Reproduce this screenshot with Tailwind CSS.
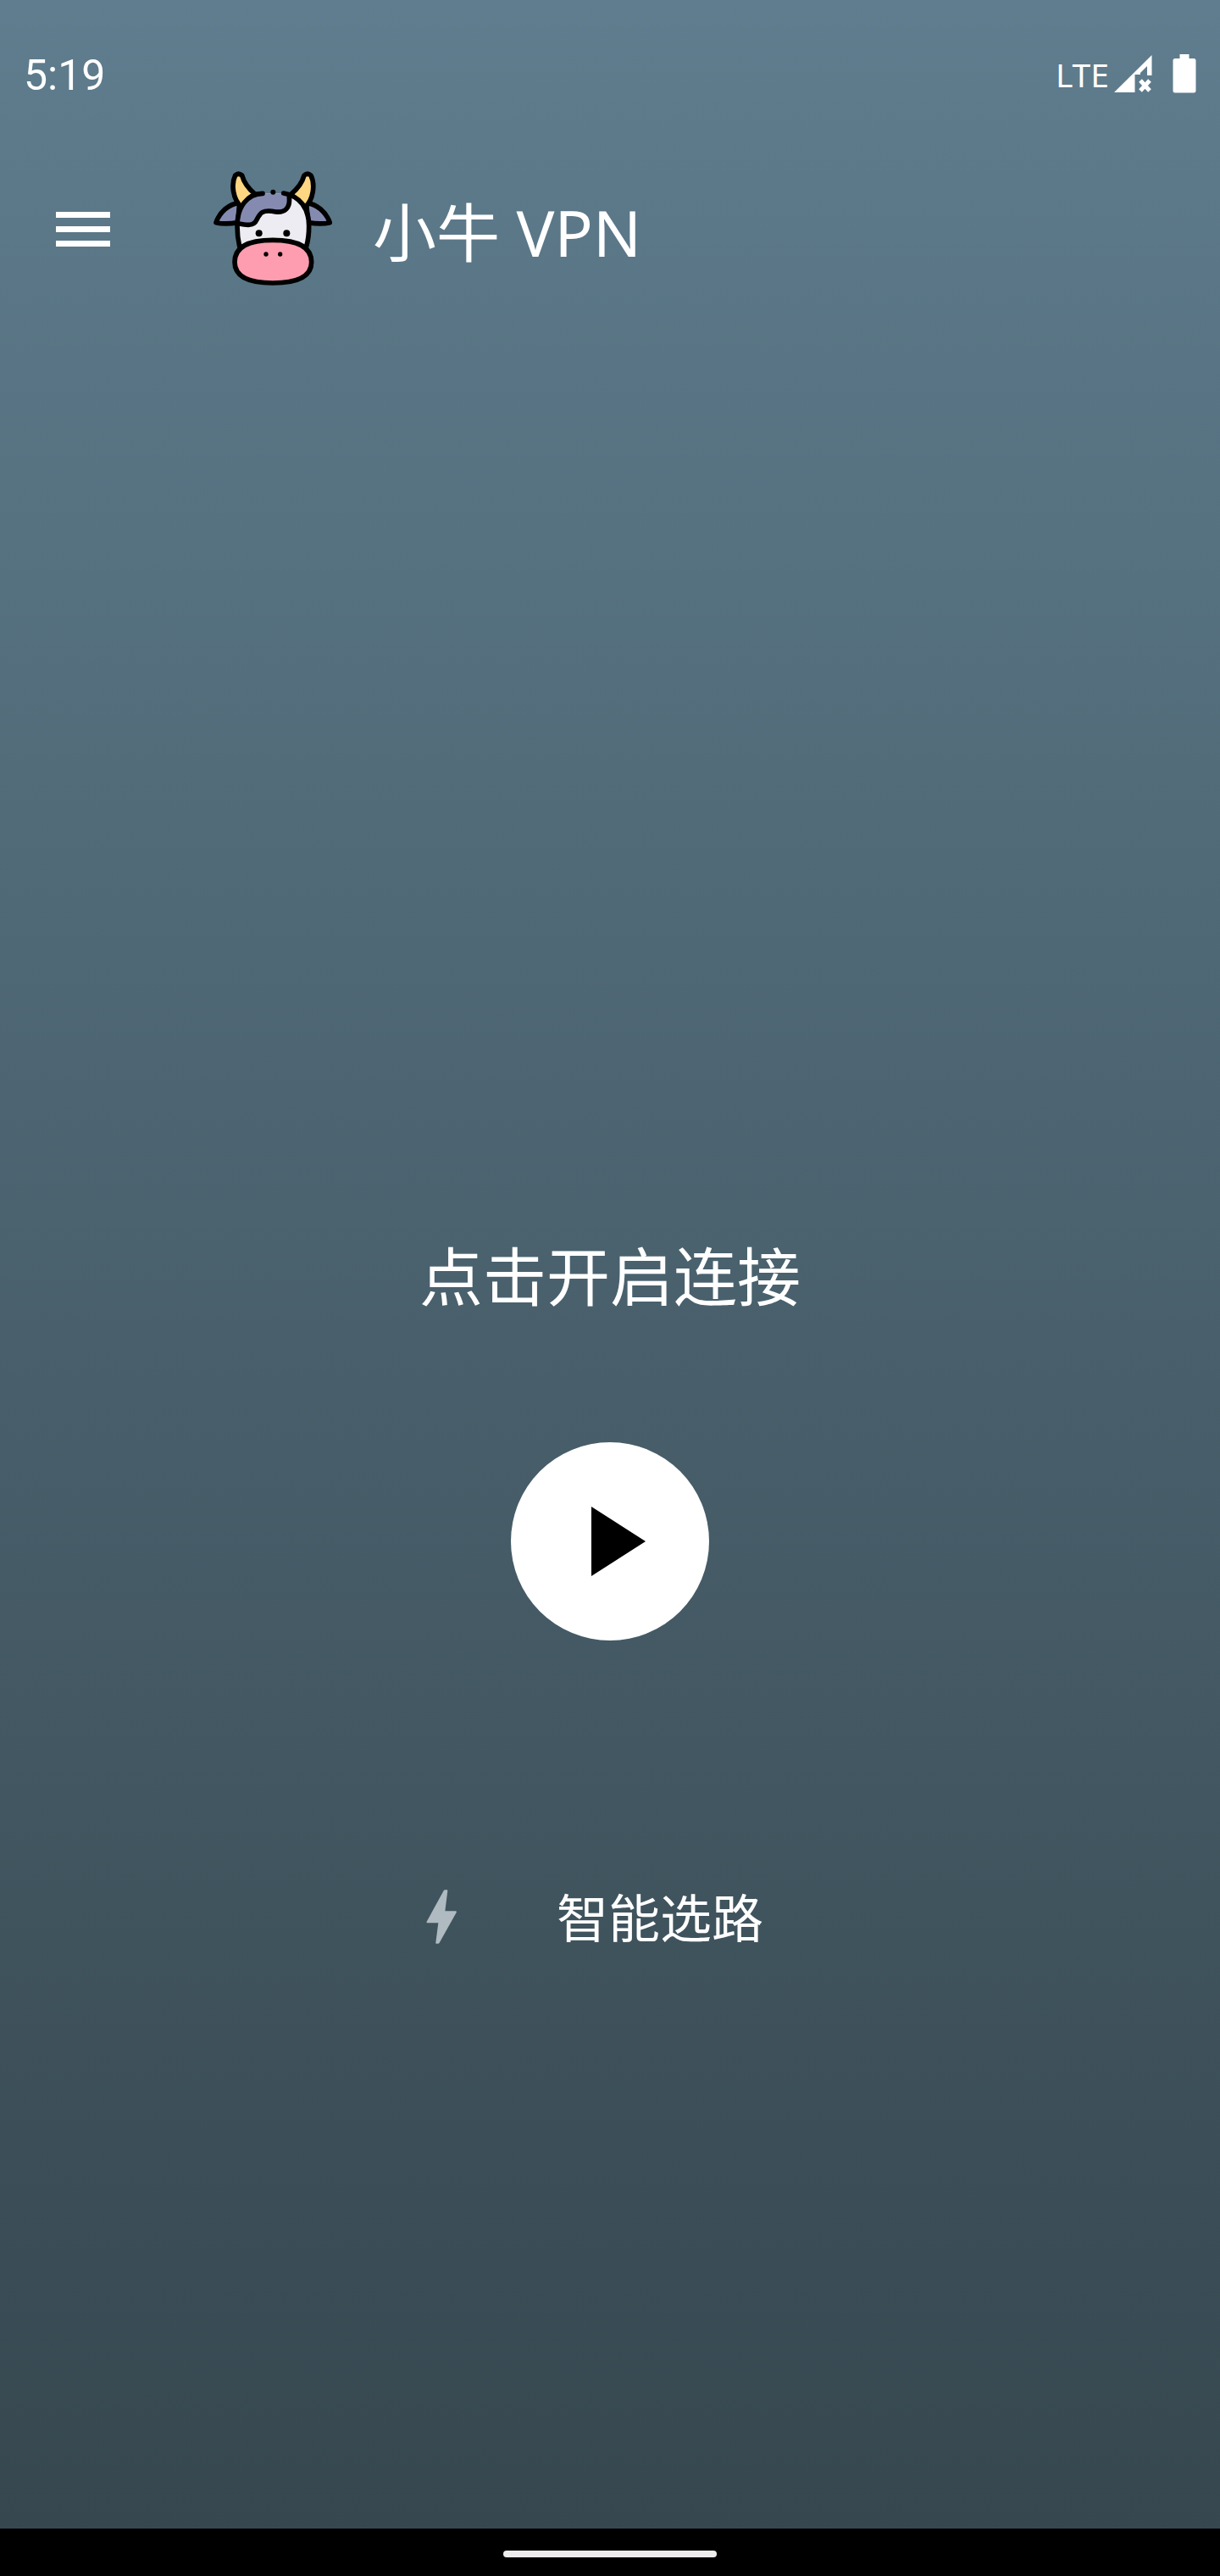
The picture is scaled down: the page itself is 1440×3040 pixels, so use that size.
<!DOCTYPE html>
<html lang="zh-CN">
<head>
  <meta charset="UTF-8">
  <meta name="viewport" content="width=device-width, initial-scale=1">
  <title>小牛 VPN</title>
  <script src="https://cdn.jsdelivr.net/npm/@tailwindcss/browser@4"></script>
</head>
<body class="min-h-screen flex flex-col bg-black text-white font-['Noto_Sans','Noto_Sans_CJK_SC',sans-serif]">

  <div class="flex-1 flex flex-col bg-linear-to-b from-[#5f7d8e] to-[#36474f]">

    <!-- Status bar -->
    <div class="h-[174px] px-7 flex items-center justify-between">
      <span class="pt-1 text-[50px] leading-none font-['Roboto',sans-serif]">5:19</span>
      <div class="flex items-center">
        <span class="text-[39px] leading-none">LTE</span>
        <svg class="ml-[6px] w-[45px] h-[45px]" viewBox="0 0 45 45" fill="#fff" aria-label="No signal">
          <path d="M0 44L44.500 0V24H39V13L31 21V23H24.500V44Z"/>
          <path d="M31 30L42 42M42 30L31 42" stroke="#fff" stroke-width="5"/>
        </svg>
        <svg class="ml-6 w-7 h-[46px]" viewBox="0 0 28 46" fill="#fff" aria-label="Battery">
          <path d="M8.500 0H19.500V5H25Q27.500 5 27.500 7.500V43Q27.500 45.500 25 45.500H3Q.5 45.500 .5 43V7.500Q.5 5 3 5H8.500Z"/>
        </svg>
      </div>
    </div>

    <!-- Header -->
    <header class="h-48 px-[66px] flex items-center">
      <button type="button" aria-label="菜单" class="w-16 flex flex-col gap-[10px]">
        <span class="h-[7px] bg-white"></span>
        <span class="h-[7px] bg-white"></span>
        <span class="h-[7px] bg-white"></span>
      </button>
      <svg class="ml-[122px] w-[140px] h-[136px]" viewBox="50 52 420 408" stroke="#000" stroke-width="17" stroke-linecap="round" stroke-linejoin="round" aria-hidden="true">
        <!-- ears -->
        <path fill="#858bb0" d="M142 164C104 168 72 196 59 234C84 240 112 238 136 234Z"/>
        <path fill="#858bb0" d="M378 164C416 168 448 196 462 234C437 240 410 238 386 234Z"/>
        <!-- horns -->
        <path fill="#ffd782" d="M150 180C118 152 112 98 127 67Q138 56 151 67C158 94 175 115 198 134Z"/>
        <path fill="#ffd782" d="M374 180C405 152 410 98 395 67Q383 56 371 67C364 94 347 115 324 134Z"/>
        <!-- head -->
        <path fill="#ececf2" stroke="none" d="M141 320C116 216 140 128 226 131H300C384 134 400 216 380 322Z"/>
        <path fill="#858bb0" stroke="none" d="M136 238C140 180 172 132 226 131H300L318 140C324 182 303 200 270 196C222 186 214 202 203 224C192 248 166 243 136 238Z"/>
        <path fill="none" d="M224 131C170 132 134 178 134 246C134 272 136 292 142 318M298 130C356 140 388 184 388 246C388 274 386 294 379 318"/>
        <path fill="none" d="M318 145C322 182 303 200 270 196C222 186 214 202 203 224C192 248 166 243 140 238"/>
        <!-- muzzle -->
        <path fill="#ff9db0" d="M260 296C178 296 125 318 125 374C125 424 172 448 260 448C348 448 397 424 397 374C397 318 342 296 260 296Z"/>
        <g fill="#000" stroke="none">
          <circle cx="261" cy="126" r="9"/>
          <circle cx="211" cy="272" r="12"/>
          <circle cx="309" cy="272" r="12"/>
          <circle cx="236" cy="346" r="8"/>
          <circle cx="286" cy="346" r="8"/>
        </g>
      </svg>
      <h1 class="ml-12 pt-2 text-[75px] leading-[96px]">小牛 VPN</h1>
    </header>

    <!-- Connect -->
    <main class="flex-1 flex flex-col items-center">
      <div class="flex-[13]"></div>
      <p class="text-[75px] leading-[96px]">点击开启连接</p>
      <button type="button" aria-label="开启连接" class="mt-[148px] size-[234px] rounded-full bg-white flex items-center justify-center">
        <svg class="ml-5 w-16 h-[82px]" viewBox="0 0 64 82"><path d="M0 0L64 41L0 82Z"/></svg>
      </button>
      <button type="button" class="mt-[280px] pr-9 flex items-center gap-[118px] text-[61px] leading-[96px]">
        <svg class="w-9 h-16 mb-1" viewBox="71 86 108 192" fill="#afbbc1" aria-hidden="true">
          <path d="M137 87H145Q147 87 147 90L138 162H175Q180 162 178 167L118 274Q116 277 113 277H107Q104 277 105 273L114 204H75Q71 204 73 199L133 90Q135 87 137 87Z"/>
        </svg>
        <span>智能选路</span>
      </button>
      <div class="flex-[8]"></div>
    </main>
  </div>

  <!-- Gesture bar -->
  <div class="h-14 pt-1 flex items-center justify-center bg-black">
    <div class="w-[252px] h-2 rounded-full bg-[#edebed]"></div>
  </div>

</body>
</html>
